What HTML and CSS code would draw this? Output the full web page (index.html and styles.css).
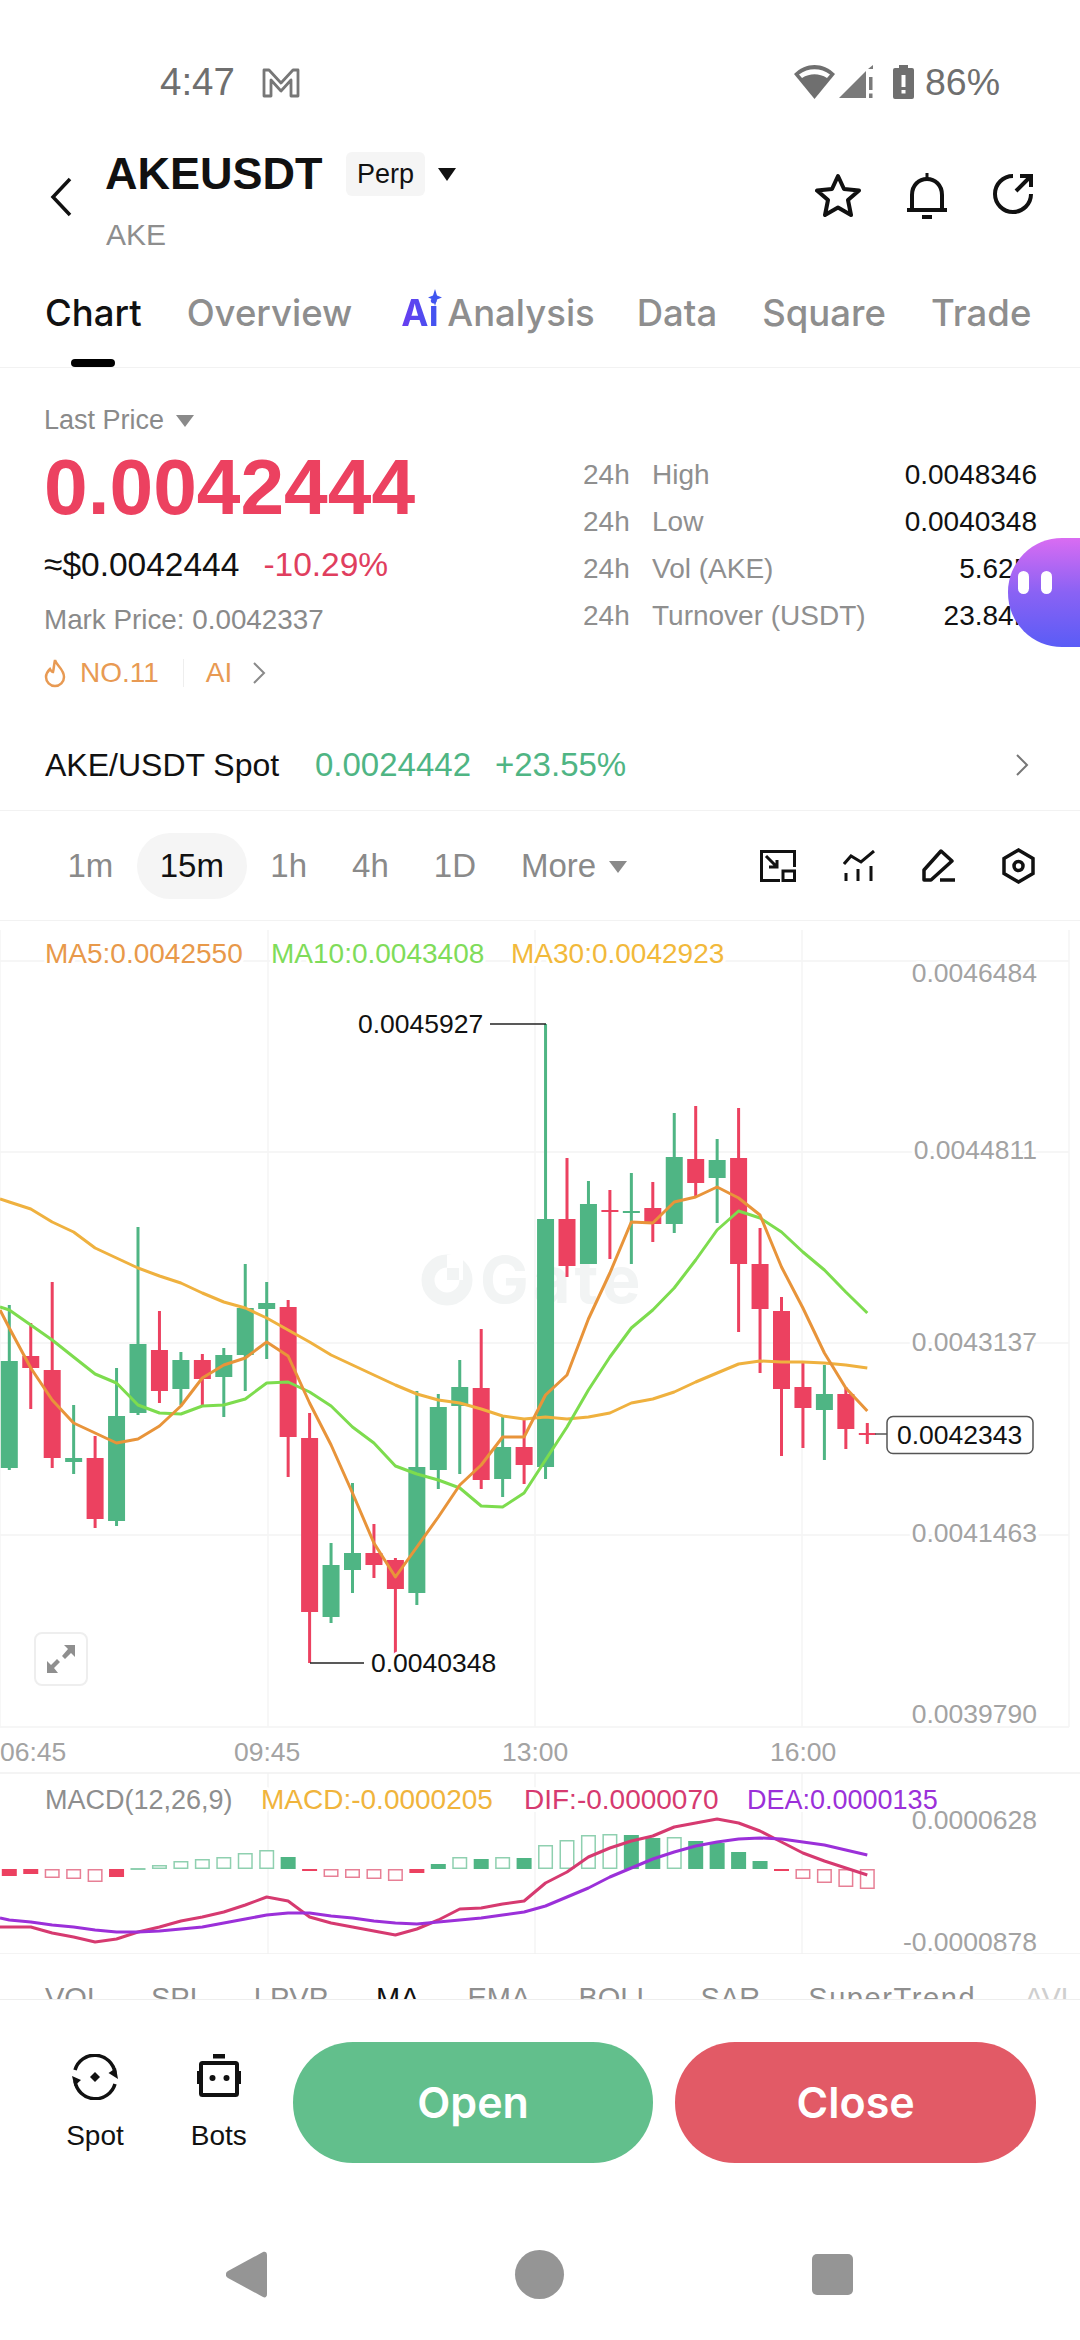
FILE: index.html
```html
<!DOCTYPE html>
<html lang="en">
<head>
    <meta charset="UTF-8">
    <meta name="viewport" content="width=device-width, initial-scale=1.0">
    <title>AKEUSDT Perp</title>
    <link rel="stylesheet" href="styles.css">
</head>
<body>
<div class="page">

    <!-- status bar -->
    <div class="status-bar">
        <span class="status-time">4:47</span>
        <svg class="status-mail" width="38" height="30" viewBox="0 0 38 30" fill="none" stroke="#777" stroke-width="2.800" stroke-linejoin="round"><path d="M2 28V2h5l12 13L31 2h5v26h-7V12l-10 11L9 12v16z"/></svg>
        <span class="status-right">
            <svg class="status-wifi" width="41" height="34" viewBox="0 0 41 34"><path d="M0 9C12-3 29-3 41 9L20.500 34z" fill="#6f6f6f"/><path d="M5 9.500C14 2.500 27 2.500 36 9.500l-3 3.500C25 8 16 8 8 13z" fill="#fff"/></svg>
            <svg class="status-signal" width="34" height="34" viewBox="0 0 34 34"><path d="M0 33L27 6v27zM29 4l5-4v4z" fill="#7a7a7a"/><path d="M30 12h3.500v13H30zM30 28.500h3.500V33H30z" fill="#7a7a7a"/></svg>
            <svg class="status-batt" width="21" height="34" viewBox="0 0 21 34"><path d="M6 0h9v3h4a2 2 0 012 2v27a2 2 0 01-2 2H2a2 2 0 01-2-2V5a2 2 0 012-2h4z" fill="#6f6f6f"/><path d="M8.500 10h4v12h-4zM8.500 25h4v3.500h-4z" fill="#fff"/></svg>
            <span class="status-pct">86%</span>
        </span>
    </div>

    <!-- title -->
    <div class="head">
        <svg class="back-icon" width="22" height="40" viewBox="0 0 22 40" fill="none" stroke="#111" stroke-width="3.500"><path d="M20 2L3 20l17 18"/></svg>
        <div class="title-block">
            <div class="title-row">
                <span class="symbol">AKEUSDT</span>
                <span class="chip">Perp</span>
                <span class="caret caret-black"></span>
            </div>
            <div class="symbol-sub">AKE</div>
        </div>
        <div class="head-icons">
            <svg width="46" height="44" viewBox="0 0 46 44" fill="none" stroke="#111" stroke-width="4" stroke-linejoin="round"><path d="M23 3l6 13 15 1.500L33 27l3 15-13-7.500L10 42l3-15L2 17.500 17 16z"/></svg>
            <svg width="40" height="46" viewBox="0 0 40 46" fill="none" stroke="#111" stroke-width="4"><path d="M0 37h40M5 37V22C5 12 12 6 20 6s15 6 15 16v15"/><path d="M20 0v6" stroke-width="3"/><path d="M15 44h10"/></svg>
            <svg width="42" height="42" viewBox="0 0 42 42" fill="none" stroke="#111" stroke-width="4"><path d="M20 3A18 18 0 1038 21"/><path d="M23 18L38 3M27 3h11v11"/></svg>
        </div>
    </div>

    <!-- tabs -->
    <div class="tabs">
        <span class="tab tab-active">Chart</span>
        <span class="tab">Overview</span>
        <span class="tab tab-ai">
            <span class="ai-mark">Ai<svg width="14" height="17" viewBox="0 0 14 17"><path d="M7 0l2 6.500L14 8.500 9 10.500 7 17l-2-6.500L0 8.500l5-2z" fill="#3f56f0"/></svg></span>
            Analysis
        </span>
        <span class="tab">Data</span>
        <span class="tab">Square</span>
        <span class="tab">Trade</span>
    </div>

    <!-- price block -->
    <div class="price-block">
        <div class="price-left">
            <div class="last-label">Last Price <span class="caret caret-grey"></span></div>
            <div class="last-price">0.0042444</div>
            <div class="price-sub">≈$0.0042444<span class="price-change">-10.29%</span></div>
            <div class="mark-price">Mark Price: 0.0042337</div>
            <div class="hot-row">
                <svg width="22" height="30" viewBox="0 0 22 30" fill="none" stroke="#e89a53" stroke-width="2.500"><path d="M11 2c1 5 9 9 9 17a9 9 0 01-18 0c0-4 2-6 4-8 1 2 2 3 3 3 1-4 1-8 2-12z"/></svg>
                <span class="hot-no">NO.11</span>
                <span class="hot-line"></span>
                <span class="hot-ai">AI</span>
                <svg width="14" height="22" viewBox="0 0 14 22" fill="none" stroke="#8a8a8a" stroke-width="2"><path d="M2 1l10 10L2 21"/></svg>
            </div>
        </div>
        <div class="stats">
            <div class="stat-row"><span class="stat-24">24h</span><span class="stat-name">High</span><span class="stat-val">0.0048346</span></div>
            <div class="stat-row"><span class="stat-24">24h</span><span class="stat-name">Low</span><span class="stat-val">0.0040348</span></div>
            <div class="stat-row"><span class="stat-24">24h</span><span class="stat-name">Vol (AKE)</span><span class="stat-val">5.62M</span></div>
            <div class="stat-row"><span class="stat-24">24h</span><span class="stat-name">Turnover (USDT)</span><span class="stat-val">23.84M</span></div>
        </div>
    </div>

    <!-- spot link -->
    <div class="spot-row">
        <span class="spot-name">AKE/USDT Spot</span>
        <span class="spot-price">0.0024442</span>
        <span class="spot-change">+23.55%</span>
        <svg class="spot-arrow" width="14" height="22" viewBox="0 0 14 22" fill="none" stroke="#777" stroke-width="2"><path d="M2 1l10 10L2 21"/></svg>
    </div>

    <!-- intervals -->
    <div class="intervals">
        <span class="interval">1m</span>
        <span class="interval interval-active">15m</span>
        <span class="interval">1h</span>
        <span class="interval">4h</span>
        <span class="interval">1D</span>
        <span class="interval">More<span class="caret caret-grey caret-more"></span></span>
        <div class="chart-tools">
            <svg width="36" height="32" viewBox="0 0 36 32" fill="none" stroke="#111" stroke-width="3"><path d="M20 30.500H1.500v-29h33V17"/><rect x="23" y="21" width="11.500" height="9.500"/><path d="M17 10v7H9M6 6l11 11"/></svg>
            <svg width="32" height="31" viewBox="0 0 32 31" fill="none" stroke="#111" stroke-width="3"><path d="M1 14l7-8 10 6L31 1M3 23v8M15 19v12M28 16v15"/></svg>
            <svg width="33" height="33" viewBox="0 0 33 33" fill="none" stroke="#111" stroke-width="3.500" stroke-linejoin="round"><path d="M19 2l11 10L9 31H2V21z"/><path d="M18 31h15"/></svg>
            <svg width="33" height="36" viewBox="0 0 33 36" fill="none" stroke="#111" stroke-width="3.500"><path d="M16.500 2l14.500 8.500v15L16.500 34 2 25.500v-15z"/><circle cx="16.500" cy="18" r="4.500"/></svg>
        </div>
    </div>

    <!-- kline + macd, drawn by chart.js -->
    <div class="chart-wrap">
        <svg id="chart" class="chart" width="1080" height="1033" viewBox="0 921 1080 1033"></svg>
        <div class="expand-btn">
            <svg width="28" height="28" viewBox="0 0 28 28" fill="#8f8f8f"><path d="M28 0v12l-4-4-6 6-3-3 6-7-4-4zM0 28V16l4 4 6-6 3 3-6 6 4 5z"/></svg>
        </div>
    </div>

    <div class="indicators">
        <span>VOL</span><span>SPL</span><span>LPVP</span><span class="ind-active">MA</span><span>EMA</span><span>BOLL</span><span>SAR</span><span class="ind-wide">SuperTrend</span><span class="ind-fade">AVL</span>
    </div>

    <!-- actions -->
    <div class="actions">
        <div class="shortcut">
            <svg width="46" height="46" viewBox="0 0 46 46" fill="none" stroke="#111" stroke-width="3.500"><path d="M3 16A20.500 20.500 0 0143 19M43 30A20.500 20.500 0 013 27"/><path d="M46 25l-9.500-6L44 14zM0 22l9 4-6.500 6z" fill="#111" stroke="none"/><path d="M23 18l5 5-5 5-5-5z" fill="#111" stroke="none"/></svg>
            <span>Spot</span>
        </div>
        <div class="shortcut">
            <svg width="44" height="46" viewBox="0 0 44 46" fill="none" stroke="#111" stroke-width="4"><rect x="16" y="0" width="12" height="4.500" fill="#111" stroke="none"/><rect x="4" y="9" width="36" height="32" rx="1.500"/><rect x="0" y="17" width="3" height="13" fill="#111" stroke="none"/><rect x="41" y="17" width="3" height="13" fill="#111" stroke="none"/><circle cx="15.500" cy="24" r="3" fill="#111" stroke="none"/><circle cx="29.500" cy="24" r="3" fill="#111" stroke="none"/></svg>
            <span>Bots</span>
        </div>
        <button class="trade-btn trade-open">Open</button>
        <button class="trade-btn trade-close">Close</button>
    </div>

    <!-- android nav -->
    <div class="nav-bar">
        <svg width="41" height="47" viewBox="0 0 41 47"><path d="M37 1c2-1 4 0 4 3v39c0 3-2 4-4 3L2 27c-3-2-3-5 0-7z" fill="#959595"/></svg>
        <span class="nav-home"></span>
        <span class="nav-square"></span>
    </div>

    <!-- floating assistant -->
    <div class="bubble"><i></i><i></i></div>
</div>
<script src="chart.js"></script>
</body>
</html>
```

FILE: styles.css
```css
* {
    box-sizing: border-box;
}

body {
    margin: 0;
    background: #fff;
    font-family: "Liberation Sans", Arial, sans-serif;
    color: #111;
}

.page {
    position: relative;
    width: 1080px;
    height: 2340px;
    overflow: hidden;
    background: #fff;
}

/* status bar */
.status-bar {
    height: 152px;
    padding: 62px 0 0 160px;
    display: flex;
    align-items: flex-start;
    color: #6f6f6f;
}

.status-time {
    font-size: 38.500px;
    line-height: 40px;
    width: 102px;
}

.status-mail {
    margin-top: 6px;
}

.status-right {
    margin-left: auto;
    margin-right: 80px;
    display: flex;
    align-items: center;
    height: 40px;
}

.status-signal {
    margin-left: 4px;
}

.status-batt {
    margin: 0 11px 0 20px;
}

.status-pct {
    font-size: 37.500px;
    line-height: 40px;
}

/* title */
.head {
    height: 98px;
    padding: 0 45px 0 50px;
    display: flex;
    align-items: flex-start;
}

.back-icon {
    margin: 25px 33px 0 0;
}

.title-row {
    display: flex;
    align-items: center;
    height: 44px;
}

.symbol {
    font-size: 45px;
    font-weight: 700;
    letter-spacing: 0;
    width: 241px;
}

.chip {
    background: #f5f5f5;
    border-radius: 6px;
    font-size: 27px;
    width: 79px;
    height: 44px;
    line-height: 44px;
    text-align: center;
}

.caret {
    display: inline-block;
    width: 0;
    height: 0;
    border-left: 9px solid transparent;
    border-right: 9px solid transparent;
}

.caret-black {
    border-top: 13px solid #111;
    margin: 0 0 0 13px;
}

.caret-grey {
    border-top: 12px solid #8a8a8a;
    margin-left: 4px;
    vertical-align: 2px;
}

.symbol-sub {
    margin-top: 21px;
    padding-left: 1px;
    font-size: 30px;
    line-height: 36px;
    color: #8e8e8e;
}

.head-icons {
    margin-left: auto;
    display: flex;
    align-items: flex-start;
    gap: 46px;
    padding-top: 21px;
}

/* tabs */
.tabs {
    height: 118px;
    padding: 41px 0 0 45px;
    display: flex;
    gap: 45px;
    border-bottom: 1px solid #f2f2f2;
    font-family: Inter, "Liberation Sans", sans-serif;
    font-size: 36.500px;
    line-height: 44px;
    font-weight: 500;
    color: #8e8e8e;
}

.tab {
    position: relative;
    white-space: nowrap;
}

.tab-active {
    color: #111;
}

.tab-active::after {
    content: "";
    position: absolute;
    left: 26px;
    top: 68px;
    width: 44px;
    height: 8px;
    border-radius: 4px;
    background: #000;
}

.tab-ai {
    margin-left: 4px;
    margin-right: -3px;
}

.ai-mark {
    position: relative;
    font-weight: 700;
    margin-right: -1px;
    background: linear-gradient(90deg, #6a3cf0, #3f56f0);
    -webkit-background-clip: text;
    background-clip: text;
    color: transparent;
}

.ai-mark svg {
    position: absolute;
    right: -3px;
    top: -2px;
}

/* price */
.price-block {
    padding: 34px 43px 29px 44px;
    display: flex;
    justify-content: space-between;
}

.last-label {
    font-size: 27px;
    line-height: 36px;
    color: #8a8a8a;
}

.last-price {
    margin-top: 5px;
    font-size: 78.500px;
    line-height: 88px;
    font-weight: 700;
    color: #ec4160;
}

.price-sub {
    margin-top: 14px;
    font-size: 33.500px;
    line-height: 40px;
    color: #111;
}

.price-change {
    margin-left: 24px;
    color: #e03e5e;
}

.mark-price {
    margin-top: 17px;
    font-size: 27.800px;
    line-height: 36px;
    color: #8a8a8a;
}

.hot-row {
    margin-top: 17px;
    height: 36px;
    display: flex;
    align-items: center;
    font-size: 28px;
    color: #e89a53;
}

.hot-no {
    margin-left: 14px;
}

.hot-line {
    width: 1px;
    height: 28px;
    margin: 0 22px 0 24px;
    background: #eee;
}

.hot-ai {
    margin-right: 20px;
}

.stats {
    margin-top: 49px;
    width: 454px;
    font-size: 28px;
    line-height: 47px;
}

.stat-row {
    display: flex;
}

.stat-24 {
    width: 69px;
    color: #8f8f8f;
}

.stat-name {
    color: #8f8f8f;
}

.stat-val {
    margin-left: auto;
    color: #111;
}

/* spot link */
.spot-row {
    height: 91px;
    padding: 0 51px 0 45px;
    display: flex;
    align-items: center;
    border-bottom: 1px solid #f2f2f2;
    font-size: 33px;
}

.spot-name {
    width: 270px;
    font-size: 32px;
}

.spot-price,
.spot-change {
    color: #4fb584;
}

.spot-change {
    margin-left: 24px;
}

.spot-arrow {
    margin-left: auto;
}

/* intervals */
.intervals {
    height: 110px;
    padding-left: 46px;
    display: flex;
    align-items: center;
    gap: 2px;
    border-bottom: 1px solid #f2f2f2;
    font-size: 33px;
    color: #8a8a8a;
}

.interval {
    padding: 0 21.500px;
    white-space: nowrap;
}

.interval-active {
    width: 110px;
    height: 66px;
    padding: 0;
    line-height: 66px;
    text-align: center;
    border-radius: 33px;
    background: #f5f5f5;
    color: #111;
}

.caret-more {
    margin-left: 13px;
    vertical-align: 4px;
}

.chart-tools {
    margin-left: auto;
    padding-right: 45px;
    display: flex;
    align-items: center;
    gap: 47px;
}

/* chart */
.chart-wrap {
    position: relative;
    height: 1033px;
}

.chart {
    display: block;
}

.chart text {
    font-family: "Liberation Sans", Arial, sans-serif;
    paint-order: stroke;
    stroke: #fff;
    stroke-width: 6px;
    stroke-linejoin: round;
}

.chart .axis {
    font-size: 26.500px;
    fill: #a3a3a3;
}

.chart .legend {
    font-size: 28px;
}

.chart .legend-sm {
    font-size: 27px;
}

.chart .price-mark {
    font-size: 26.500px;
    fill: #111;
}

.chart .watermark {
    font-family: Inter, sans-serif;
    font-size: 65px;
    font-weight: 700;
    letter-spacing: 4px;
    fill: #f2f4f4;
    stroke: none;
}

.expand-btn {
    position: absolute;
    left: 34px;
    top: 711px;
    width: 54px;
    height: 54px;
    border: 2px solid #eeeeee;
    border-radius: 8px;
    background: #fff;
    display: flex;
    align-items: center;
    justify-content: center;
}

/* indicators */
.indicators {
    height: 45px;
    padding: 22px 0 0 45px;
    display: flex;
    gap: 48px;
    overflow: hidden;
    font-size: 29px;
    line-height: 44px;
    color: #8e8e8e;
    white-space: nowrap;
}

.ind-active {
    color: #111;
}

.ind-wide {
    letter-spacing: 1.600px;
}

.ind-fade {
    color: #cfcfcf;
}

/* actions */
.actions {
    height: 211px;
    padding: 42px 44px 0 50px;
    display: flex;
    align-items: flex-start;
    border-top: 1px solid #eeeeee;
}

.shortcut {
    width: 90px;
    margin-top: 12px;
    margin-right: 34px;
    display: flex;
    flex-direction: column;
    align-items: center;
    font-size: 28px;
    line-height: 36px;
}

.shortcut span {
    margin-top: 18px;
}

.trade-btn {
    width: 361px;
    height: 121px;
    border: none;
    border-radius: 60px;
    color: #fff;
    font-family: Inter, "Liberation Sans", sans-serif;
    font-size: 43px;
    font-weight: 600;
    padding-bottom: 3px;
}

.trade-open {
    margin-left: -5px;
    background: #62bf8c;
}

.trade-close {
    margin-left: 22px;
    background: #e25a66;
}

/* nav */
.nav-bar {
    padding: 40px 0 0 226px;
    display: flex;
    align-items: center;
    gap: 248px;
}

.nav-home {
    width: 49px;
    height: 49px;
    border-radius: 50%;
    background: #959595;
}

.nav-square {
    width: 41px;
    height: 41px;
    border-radius: 5px;
    background: #959595;
}

/* floating assistant */
.bubble {
    position: absolute;
    right: 0;
    top: 538px;
    width: 72px;
    height: 109px;
    border-radius: 54px 0 0 54px;
    background: linear-gradient(180deg, #d96cf2 0%, #8a62f4 50%, #5a5cf6 100%);
    display: flex;
    align-items: flex-start;
    gap: 12px;
    padding: 33px 0 0 10px;
}

.bubble i {
    display: block;
    width: 11px;
    height: 23px;
    border-radius: 6px;
    background: #fff;
}
```

FILE: chart.js
```js
// candles: [body top, body bottom, wick top, wick bottom, up?]  all in page pixels
const RED = '#ec4160';
const GREEN = '#4fb584';
const candles = [
    [1361, 1468, 1305, 1470, 1], [1356, 1368, 1323, 1409, 0], [1370, 1458, 1282, 1468, 0], [1458, 1462, 1405, 1474, 1],
    [1458, 1519, 1436, 1528, 0], [1416, 1521, 1368, 1526, 1], [1344, 1413, 1227, 1415, 1], [1350, 1391, 1311, 1403, 0],
    [1360, 1389, 1352, 1405, 1], [1360, 1379, 1354, 1405, 0], [1355, 1377, 1348, 1417, 1], [1308, 1355, 1264, 1391, 1],
    [1303, 1309, 1282, 1359, 1], [1307, 1437, 1300, 1477, 0], [1438, 1612, 1413, 1663, 0], [1565, 1617, 1543, 1623, 1],
    [1553, 1570, 1483, 1593, 1], [1553, 1565, 1524, 1578, 0], [1560, 1589, 1558, 1660, 0], [1467, 1593, 1391, 1605, 1],
    [1407, 1470, 1394, 1489, 1], [1387, 1406, 1360, 1474, 1], [1388, 1480, 1329, 1489, 0], [1447, 1479, 1417, 1497, 1],
    [1447, 1465, 1420, 1484, 0], [1219, 1467, 1024, 1479, 1], [1219, 1266, 1158, 1277, 0], [1204, 1264, 1181, 1264, 1],
    [1210, 1212, 1190, 1259, 0], [1211, 1213, 1173, 1264, 1], [1208, 1224, 1182, 1242, 0], [1157, 1224, 1113, 1233, 1],
    [1159, 1183, 1106, 1197, 0], [1160, 1178, 1139, 1223, 1], [1158, 1264, 1108, 1332, 0], [1264, 1309, 1228, 1373, 0],
    [1311, 1389, 1297, 1456, 0], [1387, 1408, 1363, 1448, 0], [1394, 1410, 1365, 1460, 1], [1394, 1429, 1387, 1449, 0],
    [1433, 1435, 1423, 1444, 0]
];

const ma5 = [1328, 1368, 1400, 1423, 1433, 1443, 1439, 1426, 1406, 1378, 1365, 1358, 1342, 1356, 1403, 1445, 1493, 1543, 1577, 1547, 1517, 1485, 1465, 1437, 1437, 1395, 1375, 1319, 1273, 1222, 1223, 1202, 1197, 1187, 1198, 1215, 1267, 1308, 1353, 1388, 1411];
const ma10 = [1310, 1325, 1340, 1357, 1374, 1383, 1405, 1413, 1414, 1406, 1405, 1399, 1383, 1382, 1392, 1406, 1427, 1443, 1466, 1474, 1480, 1488, 1506, 1507, 1493, 1460, 1427, 1390, 1357, 1328, 1310, 1288, 1260, 1230, 1211, 1218, 1232, 1252, 1270, 1292, 1313];
const ma30 = [1202, 1209, 1222, 1232, 1248, 1258, 1268, 1276, 1283, 1293, 1302, 1308, 1318, 1330, 1342, 1355, 1365, 1375, 1385, 1394, 1400, 1403, 1409, 1416, 1419, 1417, 1419, 1417, 1413, 1403, 1399, 1392, 1382, 1373, 1364, 1361, 1362, 1362, 1363, 1365, 1368];

// macd bars: [end y, filled?]
const bars = [
    [1876, 1], [1874, 1], [1878, 0], [1879, 0], [1882, 0], [1877, 1], [1868, 0], [1865, 0], [1861, 0], [1859, 0], [1857, 0],
    [1853, 0], [1850, 0], [1857, 1], [1871, 1], [1877, 0], [1878, 0], [1879, 0], [1881, 0], [1873, 1], [1864, 1], [1857, 0],
    [1859, 1], [1857, 0], [1858, 1], [1845, 0], [1840, 0], [1835, 0], [1834, 0], [1835, 1], [1838, 1], [1837, 0], [1841, 1],
    [1843, 1], [1852, 1], [1861, 1], [1871, 1], [1879, 0], [1883, 0], [1887, 0], [1889, 0]
];
const dif = [1927, 1927, 1933, 1937, 1942, 1939, 1932, 1927, 1921, 1917, 1912, 1905, 1897, 1901, 1917, 1923, 1927, 1931, 1935, 1929, 1920, 1909, 1908, 1904, 1901, 1883, 1872, 1857, 1848, 1841, 1836, 1827, 1823, 1819, 1823, 1831, 1842, 1853, 1861, 1868, 1875];
const dea = [1920, 1922, 1925, 1927, 1930, 1932, 1932, 1931, 1929, 1927, 1923, 1919, 1915, 1913, 1913, 1916, 1918, 1921, 1923, 1924, 1922, 1920, 1918, 1915, 1912, 1906, 1897, 1888, 1877, 1868, 1859, 1852, 1846, 1842, 1839, 1838, 1839, 1842, 1845, 1850, 1855];

const svg = document.getElementById('chart');

function el(name, attrs, text) {
    let node = document.createElementNS('http://www.w3.org/2000/svg', name);
    for (let key in attrs) {
        node.setAttribute(key, attrs[key]);
    }
    if (text) node.textContent = text;
    svg.appendChild(node);
    return node;
}

function xAt(i) {
    return 9.3 + 21.45 * i;
}

function line(x1, y1, x2, y2, color, width) {
    el('line', { x1: x1, y1: y1, x2: x2, y2: y2, stroke: color, 'stroke-width': width || 1.5 });
}

function curve(values, color, width, startY) {
    let pts = values.map((y, i) => xAt(i).toFixed(1) + ',' + y);
    if (startY) pts.unshift('0,' + startY);
    el('polyline', { points: pts.join(' '), fill: 'none', stroke: color, 'stroke-width': width, 'stroke-linejoin': 'round' });
}

function label(x, y, text, cls, color, anchor) {
    let attrs = { x: x, y: y, class: cls };
    if (color) attrs.fill = color;
    if (anchor) attrs['text-anchor'] = anchor;
    el('text', attrs, text);
}

// grid
[961, 1152, 1343, 1535, 1727].forEach(y => line(0, y, 1069, y, '#f3f3f3'));
[0, 268, 535, 802, 1069].forEach(x => line(x, 930, x, 1727, '#f5f5f5'));
[268, 535, 802].forEach(x => line(x, 1773, x, 1954, '#f5f5f5'));
line(0, 1773, 1080, 1773, '#f0f0f0');
line(0, 1954, 1080, 1954, '#f0f0f0');

// watermark
el('circle', { cx: 447, cy: 1280, r: 19, fill: 'none', stroke: '#f2f4f4', 'stroke-width': 13 });
el('rect', { x: 447, y: 1255, width: 16, height: 25, fill: '#fff' });
el('rect', { x: 447, y: 1268, width: 12, height: 12, fill: '#f2f4f4' });
el('text', { x: 480, y: 1303, class: 'watermark' }, 'Gate');

// candles
candles.forEach((c, i) => {
    let color = c[4] ? GREEN : RED;
    let x = xAt(i);
    el('rect', { x: x - 1.5, y: c[2], width: 3, height: c[3] - c[2], fill: color });
    el('rect', { x: x - 8.5, y: c[0], width: 17, height: c[1] - c[0], fill: color });
});

curve(ma30, '#efb13f', 3, 1199);
curve(ma10, '#7ddc4e', 3, 1307);
curve(ma5, '#e8943a', 3, 1310);

// high / low markers
line(490, 1024, 546, 1024, '#222');
label(358, 1033, '0.0045927', 'price-mark');
line(310, 1663, 364, 1663, '#222');
label(371, 1672, '0.0040348', 'price-mark');

// last price tag
line(875, 1434, 887, 1434, '#555', 1.5);
el('rect', { x: 887, y: 1416.5, width: 146, height: 37, rx: 6, fill: '#fff', stroke: '#555', 'stroke-width': 1.5 });
label(897, 1444, '0.0042343', 'price-mark');

// axis labels
[[973, '0.0046484'], [1150, '0.0044811'], [1342, '0.0043137'], [1533, '0.0041463'], [1714, '0.0039790']].forEach(a => {
    label(1037, a[0] + 9, a[1], 'axis', null, 'end');
});
[[0, '06:45'], [234, '09:45'], [502, '13:00'], [770, '16:00']].forEach(a => {
    label(a[0], 1761, a[1], 'axis');
});

// ma legend
label(45, 963, 'MA5:0.0042550', 'legend', '#e8994a');
label(271, 963, 'MA10:0.0043408', 'legend', '#7fdc5a');
label(511, 963, 'MA30:0.0042923', 'legend', '#f2b93b');

// macd
const ZERO = 1869;
bars.forEach((b, i) => {
    let up = b[0] < ZERO;
    let color = up ? GREEN : RED;
    let x = xAt(i) - 7.5;
    let top = Math.min(b[0], ZERO);
    let h = Math.abs(b[0] - ZERO);
    if (b[1]) {
        el('rect', { x: x, y: top, width: 15, height: h, fill: color });
    } else {
        el('rect', { x: x + 0.75, y: top + 0.75, width: 13.5, height: Math.max(h - 1.5, 0.5), fill: '#fff', stroke: up ? '#8fd0b0' : '#e77f95', 'stroke-width': 1.5 });
    }
});
curve(dif, '#d63a70', 3, 1927);
curve(dea, '#9b30d9', 3, 1918);

label(45, 1809, 'MACD(12,26,9)', 'legend-sm', '#8e8e8e');
label(261, 1809, 'MACD:-0.0000205', 'legend', '#f0b43c');
label(524, 1809, 'DIF:-0.0000070', 'legend', '#d63a70');
label(747, 1809, 'DEA:0.0000135', 'legend-sm', '#9b30d9');
label(1037, 1829, '0.0000628', 'axis', null, 'end');
label(1037, 1951, '-0.0000878', 'axis', null, 'end');
```
